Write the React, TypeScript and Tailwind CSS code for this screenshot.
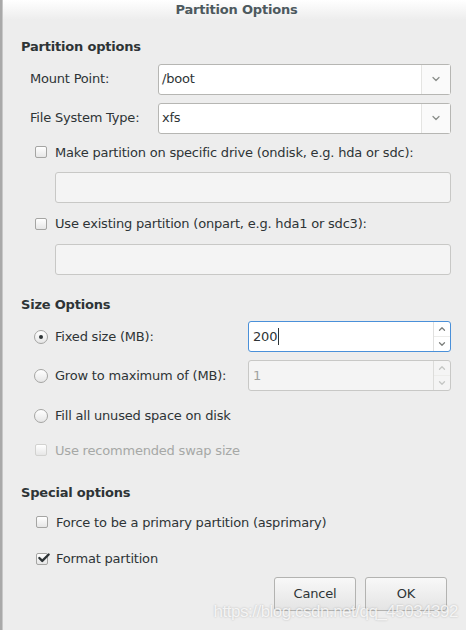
import { ChevronDown, ChevronUp, Check } from "lucide-react";

const font = { fontFamily: '"DejaVu Sans", sans-serif' };

function Combo({ value }: { value: string }) {
  return (
    <div className="flex h-[31px] flex-1 items-stretch rounded-[3px] border border-[#b6b6b3] bg-white">
      <div className="flex flex-1 items-center pl-[3px] text-[#2e3436]">{value}</div>
      <div className="flex w-[29px] items-center justify-center border-l border-[#e4e4e2] bg-[#fafafa]">
        <ChevronDown className="h-[12px] w-[12px] text-[#8a8d8a]" strokeWidth={2.5} />
      </div>
    </div>
  );
}

function Entry() {
  return <div className="h-[31px] rounded-[3px] border border-[#c8c8c6] bg-[#f4f4f4]" />;
}

function Checkbox({ checked, disabled }: { checked?: boolean; disabled?: boolean }) {
  return (
    <div
      className={`relative h-[12px] w-[12px] shrink-0 rounded-[2px] border bg-gradient-to-b from-white to-[#e6e6e6] ${
        disabled ? "border-[#d2d2d0]" : "border-[#a5a5a3]"
      }`}
    >
      {checked && (
        <Check className="absolute -top-[3px] left-[0px] h-[14px] w-[14px] text-[#2e3436]" strokeWidth={4} />
      )}
    </div>
  );
}

function Radio({ checked }: { checked?: boolean }) {
  return (
    <div className="flex h-[14px] w-[14px] shrink-0 items-center justify-center rounded-full border border-[#a5a5a3] bg-gradient-to-b from-white to-[#e6e6e6]">
      {checked && <div className="h-[4px] w-[4px] rounded-full bg-[#2e3436]" />}
    </div>
  );
}

function Spin({ value, focused }: { value: string; focused?: boolean }) {
  return (
    <div
      className={`flex h-[31px] w-[203px] items-stretch rounded-[3px] border ${
        focused ? "border-[#4a90d9] bg-white" : "border-[#c8c8c6] bg-[#f4f4f4]"
      }`}
    >
      <div className={`flex flex-1 items-center pl-[4px] ${focused ? "text-[#2e3436]" : "text-[#a0a2a0]"}`}>
        {value}
        {focused && <span className="ml-[1px] h-[17px] w-[1px] bg-[#2e3436]" />}
      </div>
      <div className={`flex w-[17px] flex-col border-l ${focused ? "border-[#e0e0df]" : "border-[#dcdcda]"}`}>
        <div className="flex flex-1 items-center justify-center border-b border-[#ececea]">
          <ChevronUp className={`h-[10px] w-[10px] ${focused ? "text-[#7c7f7c]" : "text-[#c4c6c4]"}`} strokeWidth={3} />
        </div>
        <div className="flex flex-1 items-center justify-center">
          <ChevronDown className={`h-[10px] w-[10px] ${focused ? "text-[#7c7f7c]" : "text-[#c4c6c4]"}`} strokeWidth={3} />
        </div>
      </div>
    </div>
  );
}

function Button({ label }: { label: string }) {
  return (
    <div className="flex h-[34px] w-[82px] items-center justify-center rounded-[3px] border border-[#b3b3b1] bg-gradient-to-b from-[#f8f8f8] to-[#e4e4e4] text-[#2e3436]">
      {label}
    </div>
  );
}

export default function App() {
  return (
    <div className="flex h-[630px] w-[466px] overflow-hidden bg-[#ededed] text-[13px] tracking-[-0.2px]" style={font}>
      <div className="w-[3px] bg-[#a9a9a9]" />
      <div className="relative flex flex-1 flex-col border-l border-[#c8c8c8]">
        <div className="flex h-[20px] items-center justify-center bg-gradient-to-b from-white to-[#ededed] pl-[4px] font-bold text-[#4d595e]">
          Partition Options
        </div>

        <div className="flex flex-col pl-[18px] pr-[15px] text-[#2e3436]">
          <div className="mt-[17px] font-bold">Partition options</div>

          <div className="mt-[7px] flex items-center">
            <div className="w-[137px] pl-[9px]">Mount Point:</div>
            <Combo value="/boot" />
          </div>
          <div className="mt-[8px] flex items-center">
            <div className="w-[137px] pl-[9px]">File System Type:</div>
            <Combo value="xfs" />
          </div>

          <div className="mt-[9px] flex items-center gap-[8px] pl-[14px]">
            <Checkbox />
            <span>Make partition on specific drive (ondisk, e.g. hda or sdc):</span>
          </div>
          <div className="mt-[10px] pl-[34px]">
            <Entry />
          </div>

          <div className="mt-[11px] flex items-center gap-[8px] pl-[14px]">
            <Checkbox />
            <span>Use existing partition (onpart, e.g. hda1 or sdc3):</span>
          </div>
          <div className="mt-[10px] pl-[34px]">
            <Entry />
          </div>

          <div className="mt-[20px] font-bold">Size Options</div>

          <div className="mt-[7px] flex items-center">
            <div className="flex w-[227px] items-center gap-[7px] pl-[13px]">
              <Radio checked />
              <span>Fixed size (MB):</span>
            </div>
            <Spin value="200" focused />
          </div>
          <div className="mt-[8px] flex items-center">
            <div className="flex w-[227px] items-center gap-[7px] pl-[13px]">
              <Radio />
              <span>Grow to maximum of (MB):</span>
            </div>
            <Spin value="1" />
          </div>
          <div className="mt-[15px] flex items-center gap-[7px] pl-[13px]">
            <Radio />
            <span>Fill all unused space on disk</span>
          </div>
          <div className="mt-[15px] flex items-center gap-[8px] pl-[14px] text-[#a6a8a6]">
            <Checkbox disabled />
            <span>Use recommended swap size</span>
          </div>

          <div className="mt-[23px] font-bold">Special options</div>

          <div className="mt-[10px] flex items-center gap-[8px] pl-[15px]">
            <Checkbox />
            <span>Force to be a primary partition (asprimary)</span>
          </div>
          <div className="mt-[17px] flex items-center gap-[8px] pl-[15px]">
            <Checkbox checked />
            <span>Format partition</span>
          </div>

          <div className="mt-[8px] flex justify-end gap-[9px] pr-[4px]">
            <Button label="Cancel" />
            <Button label="OK" />
          </div>
        </div>

        <div
          className="absolute bottom-[6px] right-[8px] text-[17px] tracking-[-0.5px] text-white/80"
          style={{ fontFamily: '"Liberation Sans", sans-serif', textShadow: "0 0 2px rgba(0,0,0,0.25)" }}
        >
          https://blog.csdn.net/qq_45034392
        </div>
      </div>
    </div>
  );
}
